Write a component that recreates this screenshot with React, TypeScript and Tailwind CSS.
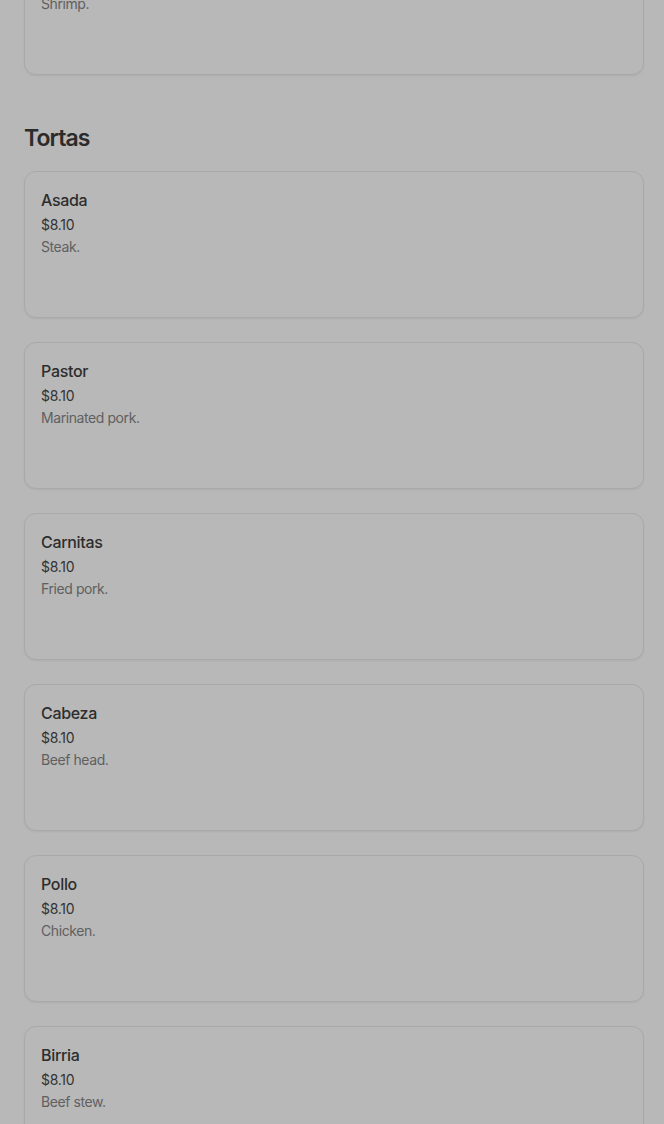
type MenuItem = {
  name: string;
  price: string;
  description: string;
};

const tortas: MenuItem[] = [
  { name: "Asada", price: "$8.10", description: "Steak." },
  { name: "Pastor", price: "$8.10", description: "Marinated pork." },
  { name: "Carnitas", price: "$8.10", description: "Fried pork." },
  { name: "Cabeza", price: "$8.10", description: "Beef head." },
  { name: "Pollo", price: "$8.10", description: "Chicken." },
  { name: "Birria", price: "$8.10", description: "Beef stew." },
];

function ItemCard({ item }: { item: MenuItem }) {
  return (
    <div className="h-[147px] rounded-xl border border-[#a9a9a9] bg-[#b8b8b8] px-4 pt-4 shadow-[0_1px_2px_rgba(0,0,0,0.06)]">
      <p className="text-[16px] leading-6 font-medium tracking-[-0.02em] text-[#2d2d2d]">{item.name}</p>
      <p className="mt-[3px] text-[14px] leading-5 tracking-[-0.02em] text-[#333333]">{item.price}</p>
      <p className="mt-[2px] text-[14px] leading-5 tracking-[-0.03em] text-[#606060]">{item.description}</p>
    </div>
  );
}

export default function App() {
  return (
    <div className="h-[1124px] overflow-hidden bg-[#b8b8b8] font-['Inter',sans-serif]">
      <div className="-mt-[72px] pl-6 pr-5">
        {/* Previous section's last item, scrolled mostly out of view */}
        <ItemCard item={{ name: "Camarón", price: "$8.10", description: "Shrimp." }} />

        {/* Tortas section */}
        <section className="mt-[47px]">
          <h2 className="text-[23px] leading-8 font-semibold tracking-[-0.04em] text-[#2b2b2b]">Tortas</h2>
          <div className="mt-[17px] flex flex-col gap-6">
            {tortas.map((item) => (
              <ItemCard key={item.name} item={item} />
            ))}
          </div>
        </section>
      </div>
    </div>
  );
}
